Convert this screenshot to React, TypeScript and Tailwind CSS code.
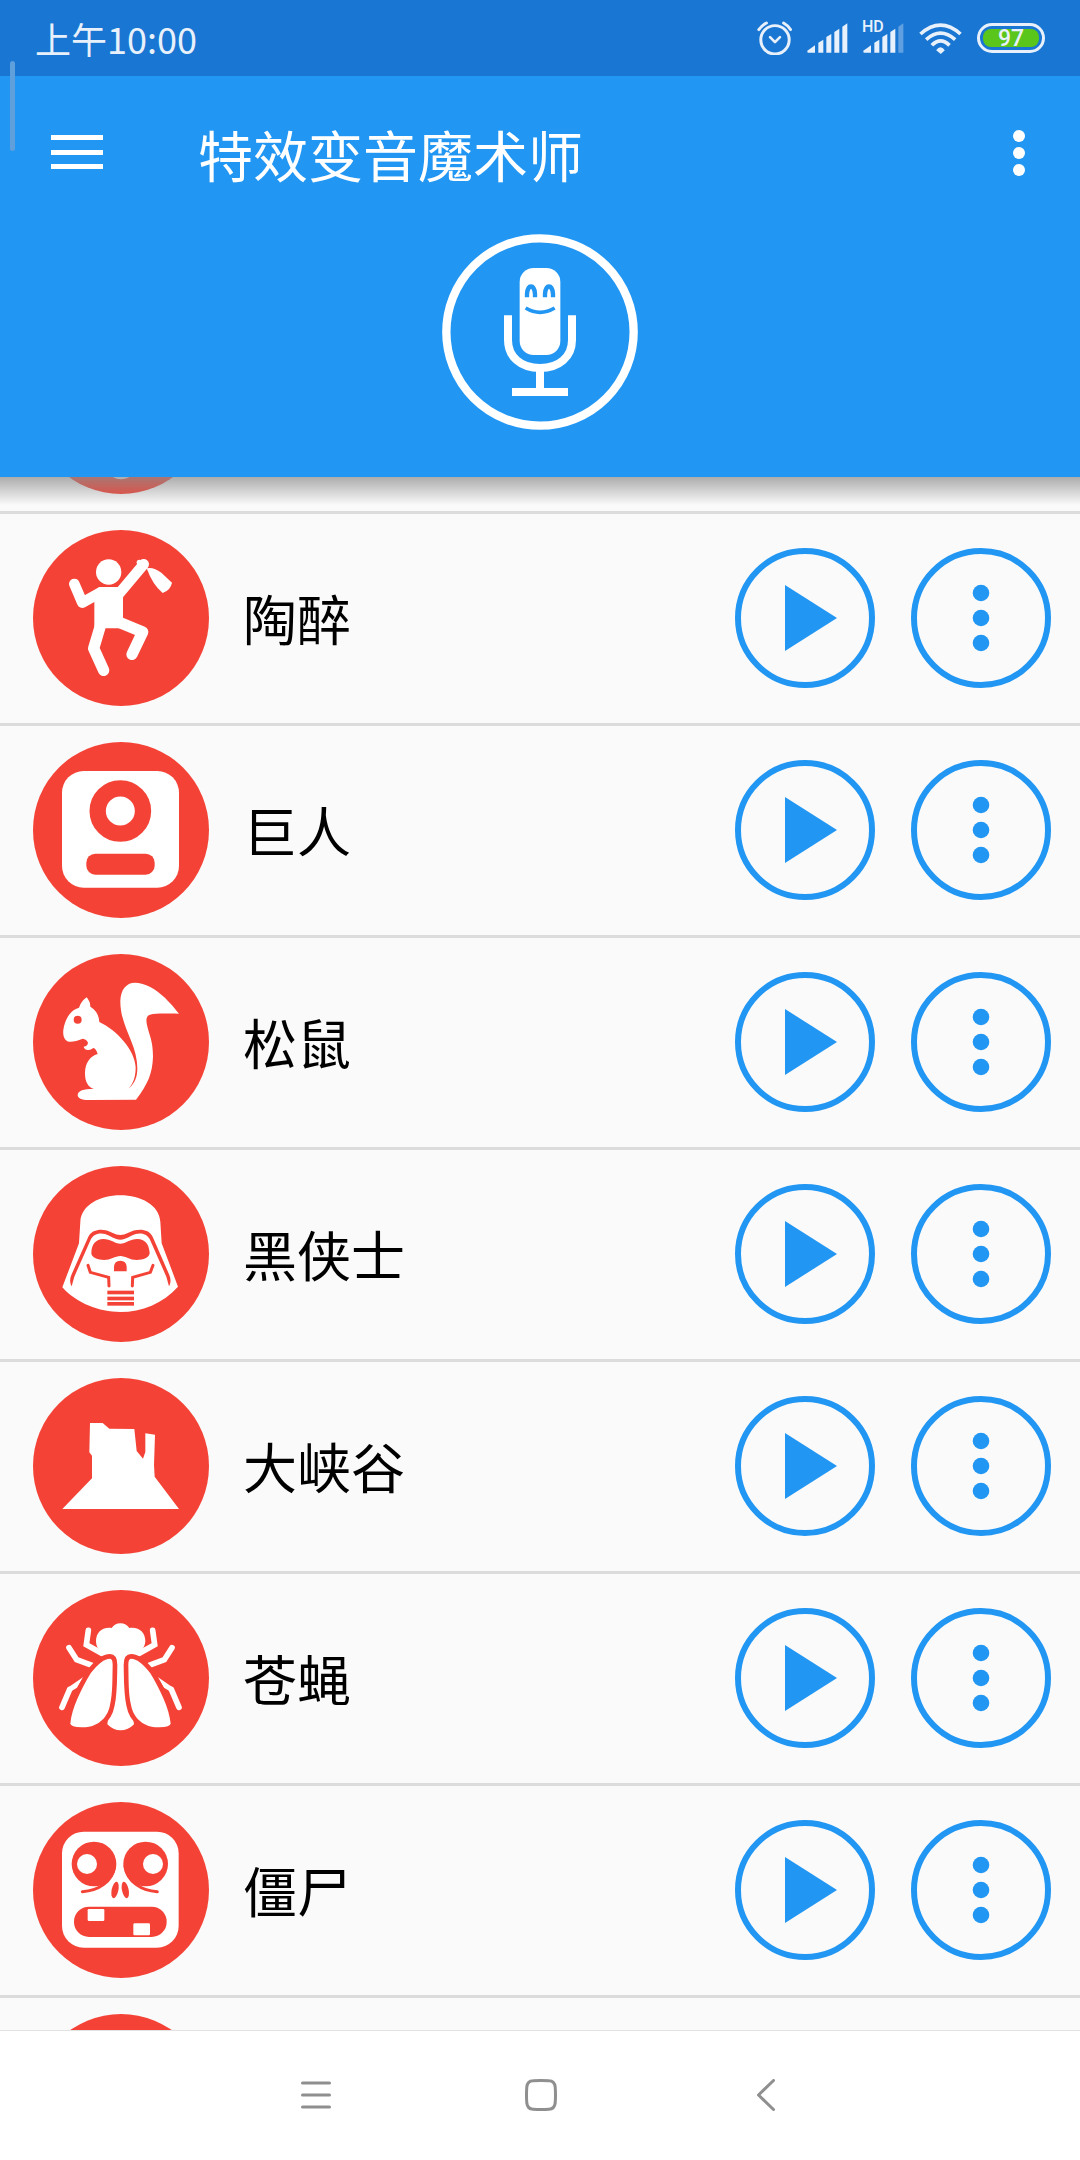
import { useLayoutEffect, useRef, type ReactNode } from "react";

const RED = "#f44336";

type Voice = { id: string; name?: string; viewBox: string; art: ReactNode };

const flySide = (
  <>
    <path d="M205 151 L199 194 L245 220" fill="none" stroke="#fff" strokeWidth="17" strokeLinecap="round" strokeLinejoin="miter" />
    <path d="M147 203 L170 239 L216 256" fill="none" stroke="#fff" strokeWidth="17" strokeLinecap="round" />
    <path d="M126 382 L149 328" fill="none" stroke="#fff" strokeWidth="17" strokeLinecap="round" />
    <path d="M141 325 L190 291 L171 323 L156 332 Z" fill="#fff" />
  </>
);

const flyWing =
  "M270 236 Q278 236 278 255 C277 300 278 340 270 375 C262 420 225 444 185 442 Q152 440 151 431 C155 385 185 325 212 280 Q245 236 270 236 Z";

const voices: Voice[] = [
  {
    id: "previous",
    viewBox: "0 0 528 528",
    art: <ellipse cx="264" cy="400" rx="62" ry="84" fill="#fff" />,
  },
  {
    id: "drunk",
    name: "陶醉",
    viewBox: "99 210 528 528",
    art: (
      <>
        <circle cx="326" cy="336" r="38" fill="#fff" />
        <path d="M297 381 L356 381 L369 412 L369 473 L362 505 L318 505 L283 500 L283 400 Z" fill="#fff" />
        <g fill="none" stroke="#fff" strokeLinecap="round" strokeLinejoin="round">
          <path d="M223 372 L247 428 L302 397" strokeWidth="32" />
          <path d="M358 400 L431 313" strokeWidth="32" />
          <path d="M350 484 L428 516 L396 583" strokeWidth="34" />
          <path d="M301 498 L281 565 L311 631" strokeWidth="34" />
        </g>
        <circle cx="418" cy="307" r="8" fill="#fff" />
        <path d="M440 325 Q460 320 484 338 L516 368 Q512 390 488 399 Q458 375 440 325 Z" fill="#fff" />
      </>
    ),
  },
  {
    id: "giant",
    name: "巨人",
    viewBox: "39 36 528 528",
    art: (
      <>
        <rect x="126" y="123" width="351" height="350" rx="65" fill="#fff" />
        <circle cx="301" cy="243" r="68" fill="none" stroke={RED} strokeWidth="49" />
        <rect x="199" y="371" width="205" height="63" rx="27" fill={RED} />
      </>
    ),
  },
  {
    id: "squirrel",
    name: "松鼠",
    viewBox: "39 42 528 528",
    art: (
      <>
        <path
          d="M200 172 Q211 185 211 200 Q236 215 238 246 C290 270 345 330 347 382 C347 410 340 430 326 446 C345 430 352 410 352 385 C352 310 300 260 301 182 C302 150 318 128 345 128 C400 130 445 180 477 221 C440 221 410 219 390 224 C378 228 378 240 381 255 C387 285 399 300 399 350 C397 400 385 430 348 479 L205 480 C185 480 173 474 173 465 C174 452 190 447 221 447 C203 440 195 425 195 400 C195 370 210 348 233 342 Q228 325 220 324 Q212 331 203 330 Q193 329 191 320 Q203 318 204 308 Q200 297 188 296 Q165 306 148 305 C135 303 128 290 130 270 C134 240 150 210 177 203 Q184 182 200 172 Z"
          fill="#fff"
        />
        <circle cx="173" cy="239" r="12" fill={RED} />
      </>
    ),
  },
  {
    id: "dark-knight",
    name: "黑侠士",
    viewBox: "39 33 528 528",
    art: (
      <>
        <path
          d="M127 397 L177 265 L181 200 C184 150 240 121 301 121 C362 121 418 150 421 200 L425 265 L474 395 C430 445 365 471 301 471 C237 471 170 445 127 397 Z"
          fill="#fff"
        />
        <g fill={RED}>
          <path d="M155 394 C149 382 149 372 154 360 L205 245 C215 225 240 221 257 226 C272 230 285 240 301 240 C317 240 330 230 345 226 C365 221 388 225 398 245 L448 360 C453 372 453 382 447 394 L439 365 L389 252 C380 236 362 233 347 237 C332 242 317 254 301 254 C285 254 270 242 255 237 C240 233 222 236 213 252 L163 365 Z" />
          <path d="M301 266 C285 266 272 252 250 252 C228 252 214 268 214 295 C214 308 235 315 252 315 C272 315 285 303 301 303 C317 303 330 315 350 315 C370 315 388 308 389 295 C388 268 375 252 352 252 C330 252 317 266 301 266 Z" />
          <path d="M282 349 V335 Q283 317 301 317 Q319 317 320 335 V349 Z" />
          <rect x="262" y="407" width="80" height="11" />
          <rect x="262" y="425" width="80" height="11" />
          <rect x="262" y="441" width="80" height="11" />
        </g>
        <g fill="none" stroke={RED} strokeWidth="9" strokeLinecap="round">
          <path d="M204 331 L211 352 L266 367 L267 393" />
          <path d="M399 331 L391 352 L338 367 L337 393" />
        </g>
      </>
    ),
  },
  {
    id: "canyon",
    name: "大峡谷",
    viewBox: "39 39 528 528",
    art: (
      <polygon
        points="210,174 248,174 268,191 343,192 350,258 369,281 376,261 376,205 405,209 402,300 404,335 477,432 127,432 216,340 216,272 208,262"
        fill="#fff"
      />
    ),
  },
  {
    id: "fly",
    name: "苍蝇",
    viewBox: "39 30 528 528",
    art: (
      <>
        {flySide}
        <g transform="translate(603 0) scale(-1 1)">{flySide}</g>
        <path
          d="M275 144 Q284 130 301 130 Q319 130 328 144 C358 140 376 158 376 184 Q375 202 362 212 L357 222 L335 380 L342 433 Q325 451 301 451 Q280 451 262 433 L268 380 L246 222 L241 212 Q228 202 228 184 C228 158 246 140 275 144 Z"
          fill="#fff"
        />
        <path d={flyWing} fill="none" stroke={RED} strokeWidth="28" strokeLinejoin="round" />
        <g transform="translate(603 0) scale(-1 1)">
          <path d={flyWing} fill="none" stroke={RED} strokeWidth="28" strokeLinejoin="round" />
          <path d={flyWing} fill="#fff" />
        </g>
        <path d={flyWing} fill="#fff" />
      </>
    ),
  },
  {
    id: "zombie",
    name: "僵尸",
    viewBox: "39 36 528 528",
    art: (
      <>
        <rect x="126" y="125" width="350" height="348" rx="65" fill="#fff" />
        <g fill={RED}>
          <circle cx="222" cy="222" r="67" />
          <circle cx="377" cy="222" r="67" />
          <ellipse cx="285" cy="300" rx="10" ry="25" transform="rotate(12 285 300)" />
          <ellipse cx="316" cy="300" rx="10" ry="25" transform="rotate(-12 316 300)" />
          <rect x="162" y="350" width="278" height="91" rx="45" />
        </g>
        <g fill="none" stroke={RED} strokeWidth="9" strokeLinecap="round">
          <path d="M187 305 C235 302 278 275 284 228" />
          <path d="M412 305 C364 302 321 275 315 228" />
        </g>
        <g fill="#fff">
          <circle cx="201" cy="222" r="30" />
          <circle cx="399" cy="222" r="30" />
          <rect x="203" y="357" width="50" height="36" rx="4" />
          <rect x="340" y="400" width="50" height="36" rx="4" />
        </g>
      </>
    ),
  },
  { id: "next", viewBox: "0 0 528 528", art: null },
];

function SignalBars({ weak = false }: { weak?: boolean }) {
  return (
    <g fill="#e8f1fb">
      <path d="M1 84 L24 68 V90 H4 Q1 90 1 87 Z" />
      <path d="M34 60 L49 51 V90 H34 Z" />
      <path d="M58 43 L73 34 V90 H58 Z" />
      <path d="M82 28 L97 18 V90 H82 Z" />
      <path d="M106 12 L121 2 V90 H106 Z" opacity={weak ? 0.35 : 1} />
    </g>
  );
}

function StatusBar() {
  return (
    <div className="flex h-[76px] items-center justify-between bg-[#1976d2] px-[35px] text-[#e8f1fb]">
      <time className="text-[36px] leading-[40px]">上午10:00</time>
      <div className="flex items-center gap-[15px]">
        <svg className="h-[34px] w-[35px]" viewBox="48 62 105 103" fill="none" stroke="#e8f1fb" strokeLinecap="round" aria-label="闹钟">
          <circle cx="102" cy="119" r="43" strokeWidth="9" />
          <path d="M87 111 L102 126 L117 111" strokeWidth="8" strokeLinejoin="round" />
          <path d="M53 88 Q62 75 76 68" strokeWidth="9" />
          <path d="M149 88 Q141 75 128 68" strokeWidth="9" />
        </svg>
        <svg className="h-[30px] w-[41px]" viewBox="0 1 123 90" aria-label="信号">
          <SignalBars />
        </svg>
        <div className="relative h-[30px] w-[41px]">
          <svg className="h-[30px] w-[41px]" viewBox="0 1 123 90" aria-label="信号">
            <SignalBars weak />
          </svg>
          <span className="absolute -top-1 -left-px font-['Roboto',sans-serif] text-[16px] leading-4 font-medium">HD</span>
        </div>
        <svg className="h-[31px] w-[43px]" viewBox="537 68 126 93" fill="none" stroke="#e8f1fb" strokeWidth="11" aria-label="无线网络">
          <path d="M540 101 Q600 48 660 101" />
          <path d="M557 118 Q600 79 644 118" />
          <path d="M574 135 Q600 108 627 135" />
          <path d="M587 150 Q600 132 613 150 L601 161 Z" fill="#e8f1fb" stroke="none" />
        </svg>
        <div className="flex h-[30px] w-[68px] rounded-full border-3 border-[#e8f1fb] p-[3px]">
          <span className="flex flex-1 items-center justify-center rounded-lg bg-[#5ac51a] font-['Roboto',sans-serif] text-[23px] leading-none font-medium">
            97
          </span>
        </div>
      </div>
    </div>
  );
}

function Header() {
  return (
    <header className="relative z-10 bg-[#2196f3] text-white">
      <StatusBar />
      <div className="absolute top-[61px] left-2.5 h-[90px] w-[5px] rounded-full bg-[#5f9fdc]" />
      <div className="flex h-[154px] items-center pr-[55px] pl-[51px]">
        <button type="button" aria-label="菜单" className="mr-[95px]">
          <svg className="h-9 w-[52px]" viewBox="0 0 52 36" fill="#fff">
            <rect y="0" width="52" height="5" />
            <rect y="15" width="52" height="5" />
            <rect y="29" width="52" height="5" />
          </svg>
        </button>
        <h1 className="flex-1 text-[55px] leading-[64px] font-normal">特效变音魔术师</h1>
        <button type="button" aria-label="更多选项">
          <svg className="h-[46px] w-3" viewBox="0 0 12 46" fill="#fff">
            <circle cx="6" cy="6" r="6" />
            <circle cx="6" cy="23" r="6" />
            <circle cx="6" cy="40" r="6" />
          </svg>
        </button>
      </div>
      <div className="flex justify-center pt-1 pb-[47px]">
        <button type="button" aria-label="录音">
          <svg className="size-[196px]" viewBox="66 42 588 588">
            <circle cx="360" cy="336" r="281" fill="none" stroke="#fff" strokeWidth="25" />
            <rect x="299" y="144" width="122" height="261" rx="42" fill="#fff" />
            <g fill="none" stroke="#2196f3">
              <path d="M321 232 V222 C323 192 343 192 345 222 V232" strokeWidth="13" />
              <path d="M375 232 V222 C377 192 397 192 399 222 V232" strokeWidth="13" />
              <path d="M317 264 Q360 290 404 264" strokeWidth="11" />
            </g>
            <path d="M264 286 V360 C264 410 302 444 360 444 C418 444 456 410 456 360 V286" fill="none" stroke="#fff" strokeWidth="24" />
            <path d="M348 450 H372 V504 H444 V528 H276 V504 H348 Z" fill="#fff" />
          </svg>
        </button>
      </div>
      <div className="pointer-events-none absolute inset-x-0 top-full h-7 bg-linear-to-b from-[#8b8b8b]/70 to-[#8b8b8b]/0" />
    </header>
  );
}

function VoiceRow({ voice }: { voice: Voice }) {
  return (
    <li className="flex h-[212px] items-center border-b-3 border-[#dcdcdc] pr-[29px] pb-px pl-[33px]">
      <div className="size-[176px] shrink-0 rounded-full bg-[#f44336]">
        <svg className="size-full" viewBox={voice.viewBox} aria-hidden="true">
          {voice.art}
        </svg>
      </div>
      {voice.name && (
        <>
          <span className="ml-[34px] flex-1 text-[54px] leading-[64px] text-black">{voice.name}</span>
          <div className="flex gap-9">
            <button type="button" aria-label={`播放 ${voice.name}`} className="size-[140px] rounded-full border-6 border-[#2196f3]">
              <svg className="size-full" viewBox="6 6 128 128" fill="#2196f3">
                <path d="M50 37 L102 70 L50 103 Z" />
              </svg>
            </button>
            <button type="button" aria-label={`更多 ${voice.name}`} className="size-[140px] rounded-full border-6 border-[#2196f3]">
              <svg className="size-full" viewBox="6 6 128 128" fill="#2196f3">
                <circle cx="70" cy="45" r="8.3" />
                <circle cx="70" cy="70" r="8.3" />
                <circle cx="70" cy="95" r="8.3" />
              </svg>
            </button>
          </div>
        </>
      )}
    </li>
  );
}

function NavigationBar() {
  return (
    <nav className="flex h-[130px] shrink-0 justify-center border-t border-[#e2e2e2] bg-white pb-0.5 pl-0.5">
      <button type="button" aria-label="最近任务" className="flex w-[225px] items-center justify-center">
        <svg className="h-8 w-[30px]" viewBox="0 0 30 32" fill="none" stroke="#8f8f8f" strokeWidth="3" strokeLinecap="round">
          <path d="M1.5 4 H28.5 M1.5 16 H28.5 M1.5 28 H28.5" />
        </svg>
      </button>
      <button type="button" aria-label="主页" className="flex w-[225px] items-center justify-center">
        <svg className="size-8" viewBox="0 0 32 32" fill="none" stroke="#8f8f8f" strokeWidth="3">
          <path d="M8 1.8 Q16 1.2 24 1.8 Q29.5 2 30.2 8 Q30.8 16 30.2 24 Q29.5 30 24 30.2 Q16 30.8 8 30.2 Q2.5 30 1.8 24 Q1.2 16 1.8 8 Q2.5 2 8 1.8 Z" />
        </svg>
      </button>
      <button type="button" aria-label="返回" className="flex w-[225px] items-center justify-center">
        <svg className="h-8 w-[18px]" viewBox="0 0 18 32" fill="none" stroke="#8f8f8f" strokeWidth="3" strokeLinecap="round" strokeLinejoin="round">
          <path d="M16.5 1.5 L1.5 16 L16.5 30.5" />
        </svg>
      </button>
    </nav>
  );
}

export default function App() {
  const list = useRef<HTMLElement>(null);

  useLayoutEffect(() => {
    if (list.current) list.current.scrollTop = 175;
  }, []);

  return (
    <div className="flex h-screen flex-col bg-[#fafafa] font-['Noto_Sans_CJK_SC',sans-serif]">
      <Header />
      <main ref={list} className="min-h-0 flex-1 overflow-y-auto [scrollbar-width:none]">
        <ul>
          {voices.map((voice) => (
            <VoiceRow key={voice.id} voice={voice} />
          ))}
        </ul>
      </main>
      <NavigationBar />
    </div>
  );
}
